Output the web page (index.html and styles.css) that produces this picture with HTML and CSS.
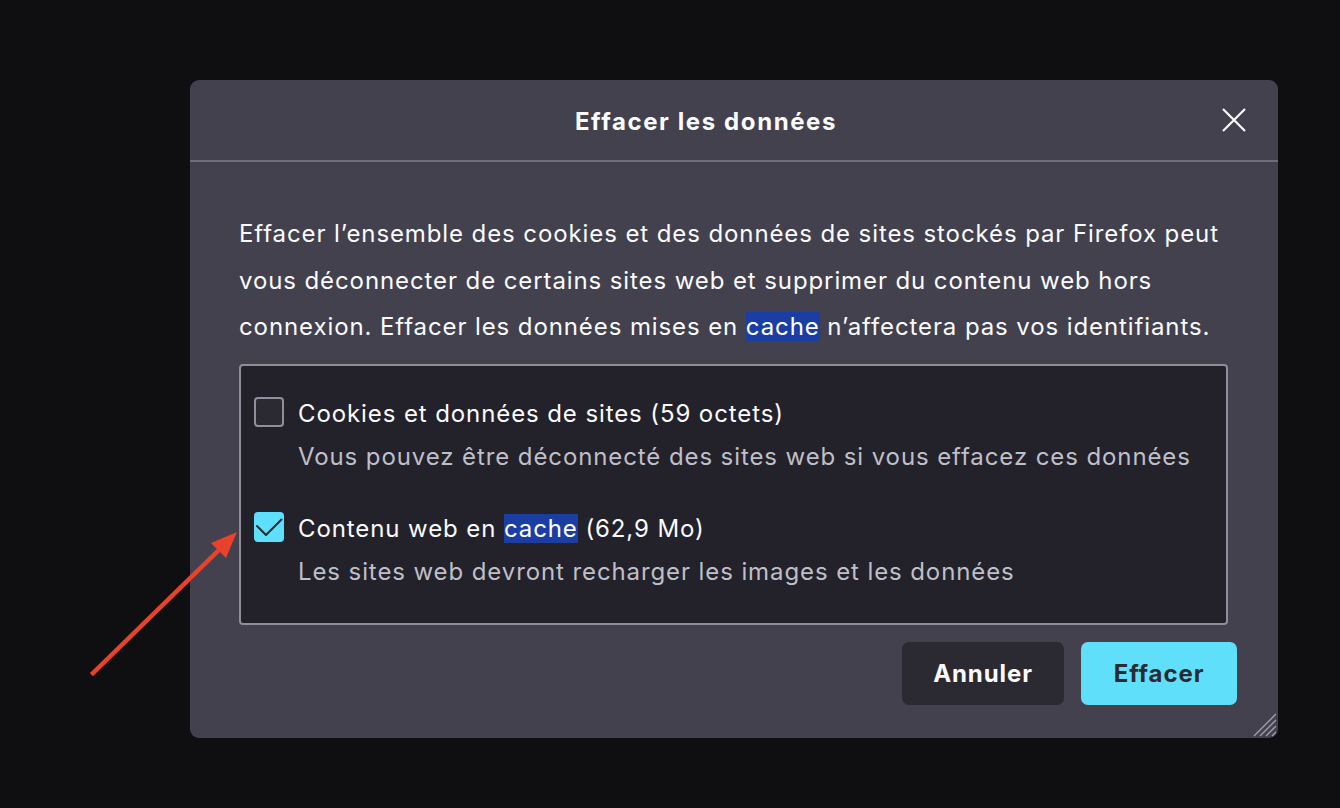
FILE: index.html
```html
<!DOCTYPE html>
<html lang="fr">
<head>
<meta charset="utf-8">
<title>Effacer les données</title>
<link rel="stylesheet" href="styles.css">
</head>
<body>
<div class="stage">
  <div class="dialog">
    <div class="header">
      <h1 class="title">Effacer les données</h1>
      <button class="close" aria-label="Fermer">
        <svg width="24" height="24" viewBox="0 0 24 24"><path d="M1 1 L23 23 M23 1 L1 23" stroke="#fbfbfe" stroke-width="2.2" fill="none"/></svg>
      </button>
    </div>
    <div class="body">
      <p class="intro">Effacer l’ensemble des cookies et des données de sites stockés par Firefox peut vous déconnecter de certains sites web et supprimer du contenu web hors connexion. Effacer les données mises en <span class="sel">cache</span> n’affectera pas vos identifiants.</p>
      <div class="options">
        <div class="option">
          <span class="check"></span>
          <div class="texts">
            <div class="label">Cookies et données de sites (59 octets)</div>
            <div class="desc">Vous pouvez être déconnecté des sites web si vous effacez ces données</div>
          </div>
        </div>
        <div class="option">
          <span class="check checked">
            <svg width="30" height="30" viewBox="0 0 30 30"><path d="M3 14 L12 23 L27.5 7.5" stroke="#2b2a33" stroke-width="2" fill="none" stroke-linecap="round" stroke-linejoin="round"/></svg>
          </span>
          <div class="texts">
            <div class="label">Contenu web en <span class="sel">cache</span> (62,9 Mo)</div>
            <div class="desc">Les sites web devront recharger les images et les données</div>
          </div>
        </div>
      </div>
    </div>
    <div class="footer">
      <button class="btn secondary">Annuler</button>
      <button class="btn primary">Effacer</button>
    </div>
    <svg class="grip" width="26" height="26" viewBox="0 0 26 26"><path d="M25 9 L9 25 M25 15 L15 25 M25 21 L21 25 M25 3 L3 25" stroke="#9f9ea8" stroke-width="1.4"/></svg>
  </div>
  <svg class="arrow" width="170" height="170" viewBox="0 0 170 170">
    <path d="M13 151 L141 26" stroke="#e8412c" stroke-width="4.5" stroke-linecap="square"/>
    <path d="M157 10 L131 21 L146 36 Z" fill="#e8412c"/>
  </svg>
</div>
</body>
</html>
```

FILE: styles.css
```css
* { box-sizing: border-box; }
html, body {
  margin: 0;
  padding: 0;
  background: #0f0f12;
  width: 1340px;
  height: 808px;
  overflow: hidden;
  font-family: "Inter", "Noto Sans", sans-serif;
}
.stage {
  position: relative;
  padding: 80px 0 0 190px;
}
.dialog {
  position: relative;
  width: 1088px;
  height: 658px;
  background: #42414d;
  border-radius: 9px;
  color: #fbfbfe;
  display: flex;
  flex-direction: column;
}
.header {
  height: 82px;
  display: flex;
  align-items: center;
  padding-right: 32px;
  border-bottom: 2px solid #6f6d79;
}
.title {
  flex: 1;
  margin: 0;
  padding-top: 3px;
  text-align: center;
  font-size: 24px;
  font-weight: 700;
  letter-spacing: 1.6px;
}
.close {
  width: 24px;
  height: 24px;
  padding: 0;
  border: 0;
  background: none;
  display: flex;
}
.body {
  padding: 49px 50px 0 49px;
  letter-spacing: 0.9px;
}
.intro {
  margin: 0;
  font-size: 24px;
  line-height: 46.5px;
}
.sel {
  background: #1b3ea4;
  color: #ffffff;
}
.options {
  margin-top: 13px;
  height: 261px;
  background: #23222a;
  border: 2px solid #8f8e99;
  border-radius: 4px;
  padding: 26px 14px 0 13px;
  display: flex;
  flex-direction: column;
  gap: 29px;
}
.option {
  display: flex;
  align-items: flex-start;
  gap: 14px;
}
.check {
  flex: none;
  width: 30px;
  height: 30px;
  margin-top: 5px;
  border: 2px solid #8f8f9d;
  border-radius: 4px;
  background: #2b2a33;
}
.check.checked {
  border: 0;
  background: #5ee0fd;
}
.check svg { display: block; }
.label {
  font-size: 24px;
  line-height: 43px;
}
.desc {
  font-size: 24px;
  line-height: 43px;
  color: #bfbfc9;
}
.footer {
  display: flex;
  justify-content: flex-end;
  gap: 17px;
  padding: 17px 41px 0 0;
}
.btn {
  height: 63px;
  border: 0;
  border-radius: 7px;
  font-family: "Inter", "Noto Sans", sans-serif;
  font-size: 24px;
  font-weight: 700;
  letter-spacing: 0.9px;
  padding: 0;
}
.btn.secondary {
  background: #2b2a33;
  color: #fbfbfe;
  width: 162px;
}
.btn.primary {
  background: #60dffb;
  color: #2b2a33;
  width: 156px;
}
.grip {
  position: absolute;
  right: 1px;
  bottom: 1px;
}
.arrow {
  position: absolute;
  left: 80px;
  top: 522px;
}
```
